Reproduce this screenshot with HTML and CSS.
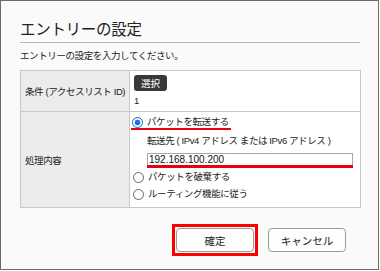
FILE: index.html
```html
<!DOCTYPE html>
<html lang="ja">
<head>
    <meta charset="UTF-8">
    <meta name="viewport" content="width=device-width, initial-scale=1.0">
    <title>エントリーの設定</title>
    <link rel="stylesheet" href="styles.css">
</head>
<body>
    <div class="dialog">
        <h1 class="dialog-title">エントリーの設定</h1>
        <p class="dialog-lead">エントリーの設定を入力してください。</p>

        <!-- Entry form table -->
        <table class="entry-table">
            <tr class="row-cond">
                <th>条件 (アクセスリスト ID)</th>
                <td>
                    <button class="select-btn" type="button">選択</button>
                    <div class="acl-id">1</div>
                </td>
            </tr>
            <tr class="row-action">
                <th>処理内容</th>
                <td>
                    <label class="opt opt-marked">
                        <input type="radio" name="action" checked>
                        <span>パケットを転送する</span>
                    </label>
                    <div class="dest-label">転送先 ( IPv4 アドレス または IPv6 アドレス )</div>
                    <div class="dest-wrap">
                        <input class="dest-input" type="text" value="192.168.100.200">
                    </div>
                    <label class="opt opt-drop">
                        <input type="radio" name="action">
                        <span>パケットを破棄する</span>
                    </label>
                    <label class="opt opt-route">
                        <input type="radio" name="action">
                        <span>ルーティング機能に従う</span>
                    </label>
                </td>
            </tr>
        </table>

        <div class="actions">
            <div class="ok-mark">
                <button class="btn" type="button">確定</button>
            </div>
            <button class="btn" type="button">キャンセル</button>
        </div>
    </div>
</body>
</html>
```

FILE: styles.css
```css
body {
  margin: 0;
  font-family: "Liberation Sans", "Noto Sans CJK JP", sans-serif;
  color: #222;
}

.dialog {
  box-sizing: border-box;
  width: 379px;
  height: 270px;
  border: 1px solid #6b6b6b;
  background-color: #fafafa;
  padding: 19px 18px 0 19px;
}

.dialog-title {
  margin: 0;
  font-size: 15.5px;
  font-weight: normal;
  letter-spacing: -0.3px;
  line-height: 20px;
  padding-bottom: 2px;
  border-bottom: 1px solid #b8b8b8;
}

.dialog-lead {
  margin: 0;
  padding-top: 6px;
  font-size: 9.5px;
  letter-spacing: -0.4px;
  line-height: 14px;
}

.entry-table {
  width: 341px;
  margin-top: 7px;
  border-collapse: collapse;
  border: 1px solid #000;
  background-color: #fff;
  font-size: 9.5px;
  letter-spacing: -0.4px;
}

.entry-table th,
.entry-table td {
  border: 1px solid #c8c8c8;
  padding: 0;
  vertical-align: middle;
}

.entry-table th {
  width: 104px;
  padding-left: 4px;
  background-color: #ececec;
  font-weight: normal;
  text-align: left;
}

.row-cond td {
  height: 36px;
  padding: 4px 4px 0;
  vertical-align: top;
}

.select-btn {
  display: block;
  width: 33px;
  height: 16px;
  padding: 0;
  border: none;
  border-radius: 3px;
  background-color: #383838;
  color: #fff;
  font-family: inherit;
  font-size: 9.5px;
}

.acl-id {
  margin-top: 3px;
  line-height: 13px;
}

.row-action td {
  height: 91px;
  padding: 4px 0 0 1px;
  vertical-align: top;
}

.opt {
  display: flex;
  align-items: center;
  gap: 4px;
  line-height: 12px;
}

.opt input {
  appearance: none;
  box-sizing: border-box;
  width: 11px;
  height: 11px;
  margin: 0 0 0 1px;
  border: 1px solid #666;
  border-radius: 50%;
  background-color: #fff;
}

.opt input:checked {
  border-color: #1c63c6;
  background: radial-gradient(circle, #1a73e8 0 2.6px, #fff 3.2px);
}

.opt-marked {
  width: 100px;
  border-bottom: 2px solid #e60012;
}

.dest-label {
  margin: 5px 0 0 16px;
  line-height: 12px;
}

.dest-wrap {
  width: 206px;
  margin: 6px 0 0 16px;
  border-bottom: 3px solid #e60012;
}

.dest-input {
  box-sizing: border-box;
  display: block;
  width: 100%;
  height: 12px;
  padding: 0 1px;
  border: 1px solid #a8a8a8;
  border-bottom: none;
  font-family: "Liberation Sans", sans-serif;
  font-size: 10px;
  color: #111;
  outline: none;
}

.opt-drop {
  margin-top: 3px;
  margin-left: 1px;
}

.opt-route {
  margin-top: 5px;
  margin-left: 1px;
}

.actions {
  display: flex;
  justify-content: flex-end;
  align-items: center;
  gap: 10px;
  margin-top: 16px;
  padding-right: 14px;
}

.ok-mark {
  border: 3px solid #f00;
  padding: 1px;
}

.btn {
  display: block;
  width: 78px;
  height: 24px;
  padding: 0;
  border: 1px solid #9a9a9a;
  border-radius: 4px;
  background-color: #fdfdfd;
  color: #222;
  font-family: inherit;
  font-size: 10.5px;
}
```
